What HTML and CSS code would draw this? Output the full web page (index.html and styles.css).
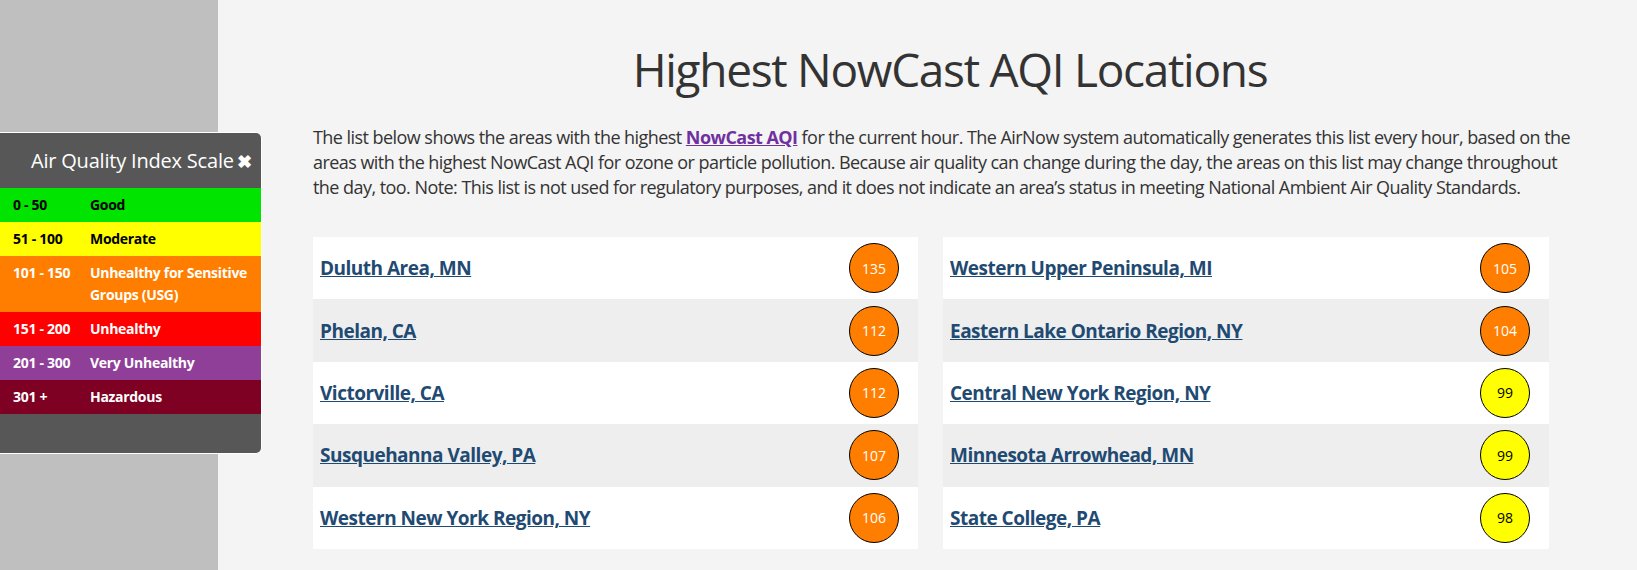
FILE: index.html
```html
<!DOCTYPE html>
<html lang="en">

<head>
    <meta charset="UTF-8">
    <meta name="viewport" content="width=device-width, initial-scale=1.0">
    <title>Highest NowCast AQI Locations</title>
    <link rel="stylesheet" href="styles.css">
</head>

<body>

    <div class="page">
        <aside class="sidebar">
            <div class="aqi-legend">
                <div class="legend-header">
                    <span class="legend-title">Air Quality Index Scale</span>
                    <span class="legend-close">&#10006;</span>
                </div>
                <div class="legend-row good"><span class="range">0 - 50</span><span class="label">Good</span></div>
                <div class="legend-row moderate"><span class="range">51 - 100</span><span class="label">Moderate</span></div>
                <div class="legend-row usg"><span class="range">101 - 150</span><span class="label">Unhealthy for Sensitive Groups (USG)</span></div>
                <div class="legend-row unhealthy"><span class="range">151 - 200</span><span class="label">Unhealthy</span></div>
                <div class="legend-row very-unhealthy"><span class="range">201 - 300</span><span class="label">Very Unhealthy</span></div>
                <div class="legend-row hazardous"><span class="range">301 +</span><span class="label">Hazardous</span></div>
            </div>
        </aside>

        <main class="content">
            <h1>Highest NowCast AQI Locations</h1>
            <p class="intro">The list below shows the areas with the highest <a href="#">NowCast AQI</a> for the current hour. The AirNow system automatically generates this list every hour, based on the areas with the highest NowCast AQI for ozone or particle pollution. Because air quality can change during the day, the areas on this list may change throughout the day, too. Note: This list is not used for regulatory purposes, and it does not indicate an area’s status in meeting National Ambient Air Quality Standards.</p>

            <div class="locations">
                <div class="location-list">
                    <div class="location"><a href="#">Duluth Area, MN</a><span class="aqi orange">135</span></div>
                    <div class="location"><a href="#">Phelan, CA</a><span class="aqi orange">112</span></div>
                    <div class="location"><a href="#">Victorville, CA</a><span class="aqi orange">112</span></div>
                    <div class="location"><a href="#">Susquehanna Valley, PA</a><span class="aqi orange">107</span></div>
                    <div class="location"><a href="#">Western New York Region, NY</a><span class="aqi orange">106</span></div>
                </div>
                <div class="location-list">
                    <div class="location"><a href="#">Western Upper Peninsula, MI</a><span class="aqi orange">105</span></div>
                    <div class="location"><a href="#">Eastern Lake Ontario Region, NY</a><span class="aqi orange">104</span></div>
                    <div class="location"><a href="#">Central New York Region, NY</a><span class="aqi yellow">99</span></div>
                    <div class="location"><a href="#">Minnesota Arrowhead, MN</a><span class="aqi yellow">99</span></div>
                    <div class="location"><a href="#">State College, PA</a><span class="aqi yellow">98</span></div>
                </div>
            </div>
        </main>
    </div>

</body>

</html>
```

FILE: styles.css
```css
body {
    margin: 0;
    font-family: "Open Sans", Arial, sans-serif;
    background-color: #f4f4f4;
    color: #333;
}

.page {
    display: flex;
    min-height: 570px;
}

.sidebar {
    position: relative;
    width: 218px;
    flex-shrink: 0;
    background-color: #bfbfbf;
}

/* floating legend sits over the sidebar */
.aqi-legend {
    position: absolute;
    top: 132px;
    left: 0;
    width: 261px;
    padding-bottom: 39px;
    background-color: #575757;
    border: 1px solid #fff;
    border-left: 0;
    border-radius: 0 6px 6px 0;
}

.legend-header {
    height: 55px;
    display: flex;
    align-items: center;
    padding-left: 31px;
    color: white;
}

.legend-title {
    font-size: 20px;
    letter-spacing: -0.2px;
    white-space: nowrap;
}

.legend-close {
    margin-left: 3px;
    font-size: 18px;
    font-weight: bold;
}

.legend-row {
    display: flex;
    padding: 6px 0 6px 13px;
    font-size: 14px;
    letter-spacing: -0.3px;
    font-weight: bold;
    line-height: 22px;
    color: white;
}

.legend-row .range {
    width: 77px;
    flex-shrink: 0;
}

.legend-row .label {
    width: 160px;
}

.good { background-color: #00e400; color: black; }
.moderate { background-color: #ffff00; color: black; }
.usg { background-color: #ff7e00; }
.unhealthy { background-color: #ff0000; }
.very-unhealthy { background-color: #8f3f97; }
.hazardous { background-color: #7e0023; }

.content {
    width: 1274px;
    padding-left: 95px;
}

h1 {
    margin: 36px 0 0;
    font-size: 46px;
    letter-spacing: -1.3px;
    font-weight: normal;
    line-height: 66px;
    text-align: center;
}

.intro {
    margin: 23px 0 0;
    font-size: 18px;
    letter-spacing: -0.55px;
    line-height: 25px;
}

.intro a {
    color: #7030a0;
    font-weight: bold;
}

.locations {
    display: grid;
    grid-template-columns: 605px 606px;
    column-gap: 25px;
    margin-top: 37px;
}

.location {
    display: flex;
    align-items: center;
    justify-content: space-between;
    height: 62.4px;
    padding: 0 19px 0 7px;
    background-color: white;
}

.location:nth-child(even) {
    background-color: #eeeeee;
}

.location a {
    color: #1f4a72;
    font-size: 19px;
    letter-spacing: -0.5px;
    font-weight: bold;
}

.aqi {
    width: 48px;
    height: 48px;
    border: 1px solid black;
    border-radius: 50%;
    display: flex;
    align-items: center;
    justify-content: center;
    font-size: 14px;
}

.aqi.orange {
    background-color: #ff7e00;
    color: white;
}

.aqi.yellow {
    background-color: #ffff00;
    color: black;
}
```
